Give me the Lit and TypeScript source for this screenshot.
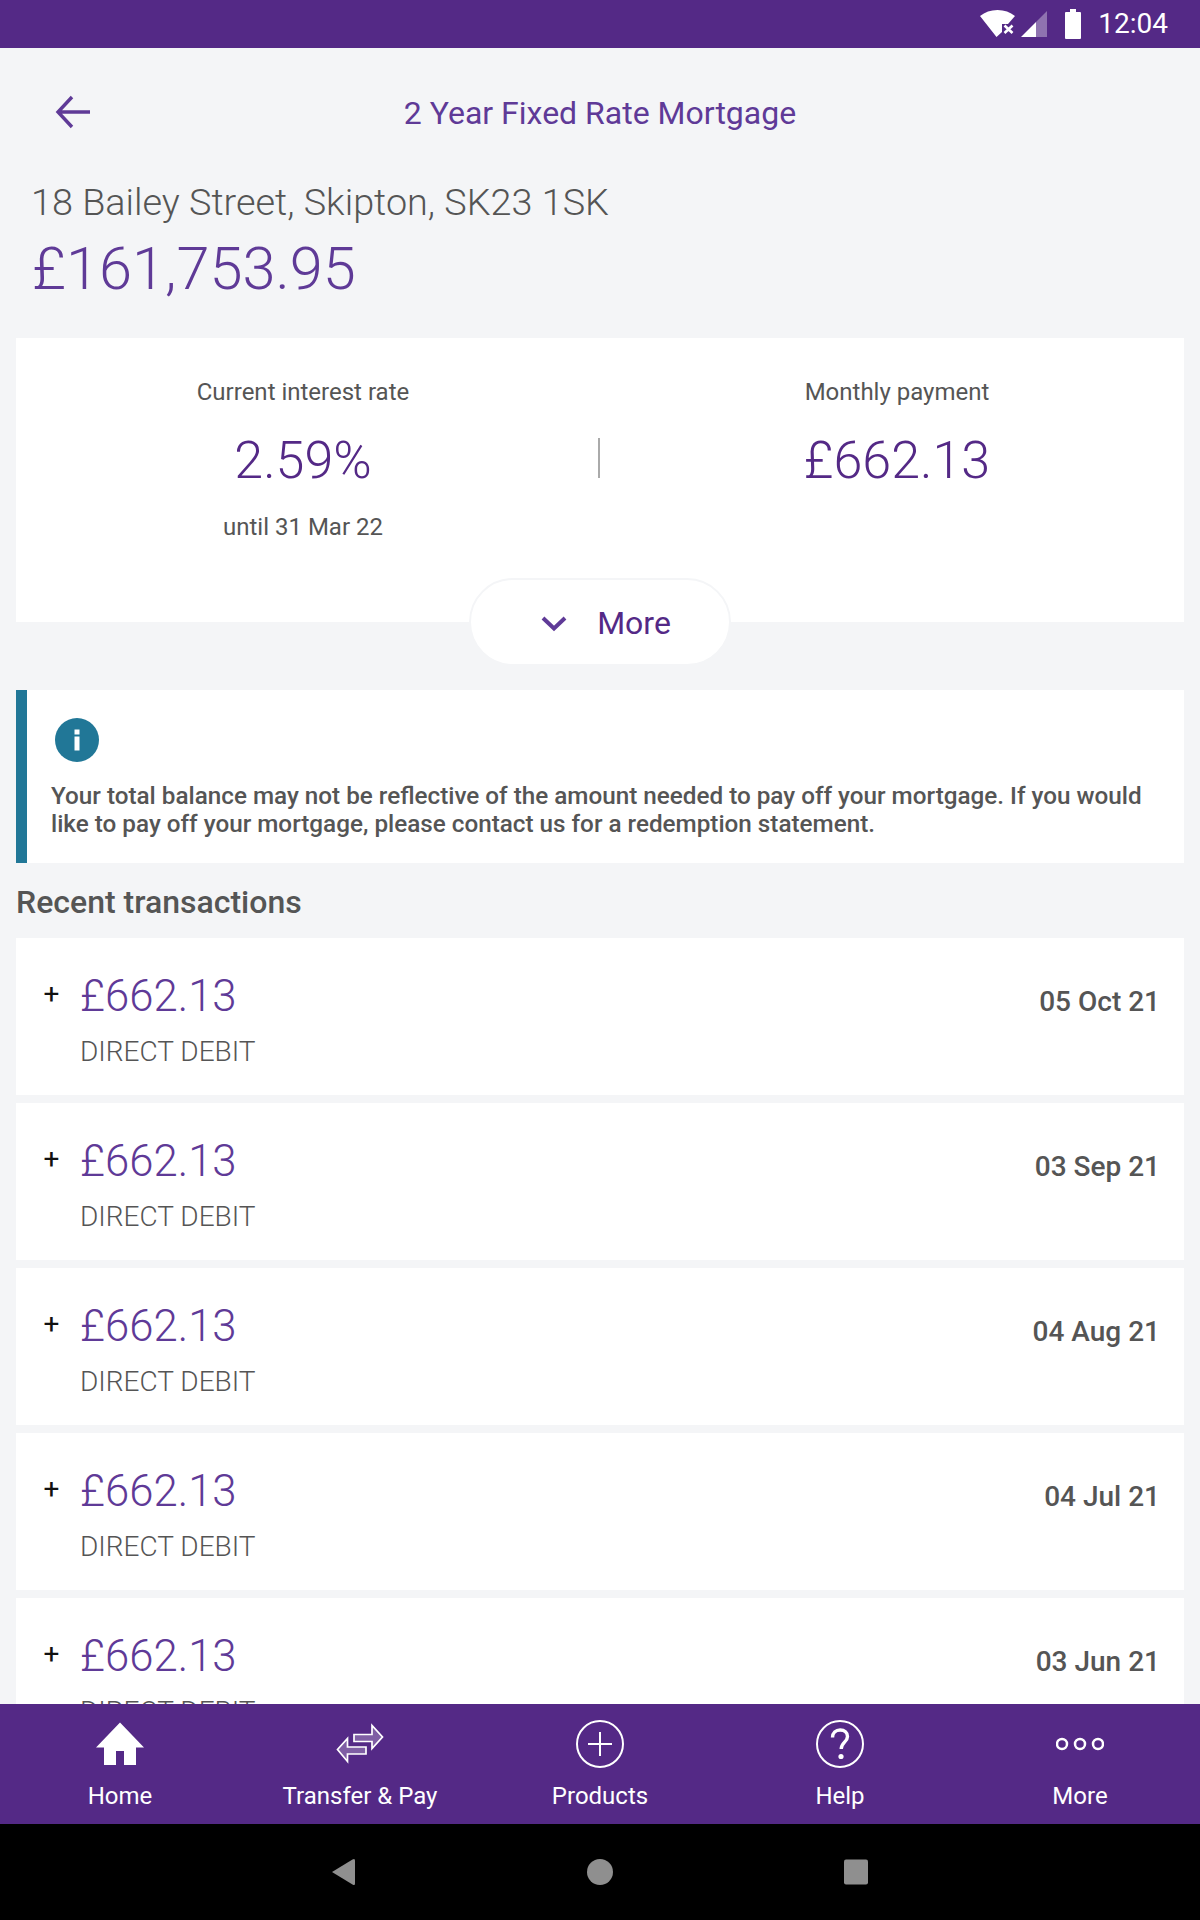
import { LitElement, html, css, svg } from "lit";
import { customElement } from "lit/decorators.js";

const TX = ["05 Oct 21", "03 Sep 21", "04 Aug 21", "04 Jul 21", "03 Jun 21"];

const homeIcon = svg`<svg class="ico" viewBox="0 0 48 48" width="48" height="48"><path fill="#fff" d="M24 2.500 0 27.500h8V45h12V31h8v14h12V27.500h8z"/></svg>`;
const transferIcon = svg`<svg class="ico" viewBox="0 0 48 48" width="48" height="48"><g fill="rgba(255,255,255,.25)" stroke="#fff" stroke-width="1.700"><path d="M18 14.500H36V5.500L46.500 17 36 28.500V21.500H18z"/><path d="M30 27H11.500V18.500L1.500 29.500 11.500 41.500V34H30z"/></g></svg>`;
const plusIcon = svg`<svg class="ico" viewBox="0 0 48 48" width="48" height="48"><circle cx="24" cy="24" r="23" fill="none" stroke="#fff" stroke-width="2"/><path d="M24 12v24M12 24h24" stroke="#fff" stroke-width="2"/></svg>`;
const helpIcon = svg`<svg class="ico" viewBox="0 0 48 48" width="48" height="48"><circle cx="24" cy="24" r="23" fill="none" stroke="#fff" stroke-width="2"/><path d="M16.500 17.500c0-4.500 3.300-7.500 7.700-7.500 4.300 0 7.300 2.700 7.300 6.500 0 5.500-6.300 6-6.300 12.500" fill="none" stroke="#fff" stroke-width="3.400"/><circle cx="25" cy="36.500" r="2.600" fill="#fff"/></svg>`;
const moreIcon = svg`<svg class="ico" viewBox="0 0 48 48" width="48" height="48"><g fill="none" stroke="#fff" stroke-width="2.500"><circle cx="6" cy="24" r="5"/><circle cx="24" cy="24" r="5"/><circle cx="42" cy="24" r="5"/></g></svg>`;

const NAV = [
  { label: "Home", icon: homeIcon },
  { label: "Transfer & Pay", icon: transferIcon },
  { label: "Products", icon: plusIcon },
  { label: "Help", icon: helpIcon },
  { label: "More", icon: moreIcon },
];

@customElement("app-root")
export class AppRoot extends LitElement {
  static styles = css`
    :host {
      display: flex;
      flex-direction: column;
      width: 1200px;
      height: 1920px;
      background: #f4f5f7;
      font-family: Roboto, "Liberation Sans", sans-serif;
      overflow: hidden;
    }
    .status {
      height: 48px;
      flex: none;
      background: #542986;
      display: flex;
      align-items: center;
      justify-content: flex-end;
    }
    .status svg { display: block; }
    .status .net { margin-right: 17px; }
    .clock {
      color: #fff;
      font-size: 28px;
      margin: 0 32px 0 17px;
      line-height: 48px;
    }
    .main { flex: 1; min-height: 0; overflow: hidden; }
    .topbar {
      height: 128px;
      display: grid;
      grid-template-columns: 1fr auto 1fr;
      align-items: center;
    }
    .topbar svg { display: block; margin-left: 55px; }
    .title { font-size: 32px; color: #5f3a97; line-height: 36px; margin-top: 2px; }
    .address {
      font-size: 37.800px;
      font-weight: 300;
      color: #555;
      margin: 0 0 0 31px;
      line-height: 52px;
    }
    .balance {
      font-size: 59.500px;
      font-weight: 300;
      color: #5f3a97;
      margin: 1px 0 0 32px;
      line-height: 80px;
    }
    .card {
      position: relative;
      margin: 29px 16px 0;
      height: 284px;
      background: #fff;
      display: grid;
      grid-template-columns: 1fr 20px 1fr;
    }
    .cell { text-align: center; padding-top: 40px; }
    .cell .lab { font-size: 24px; color: #555; line-height: 28px; }
    .cell .val { font-size: 52px; font-weight: 300; color: #542986; line-height: 60px; margin-top: 25px; }
    .cell .sub { font-size: 24px; color: #555; line-height: 28px; margin-top: 22px; }
    .divider { width: 2px; height: 40px; background: #aaa; margin: 100px 0 0 8px; }
    .pill {
      position: absolute;
      left: 453px;
      top: 240px;
      width: 262px;
      height: 88px;
      box-sizing: border-box;
      border-radius: 44px;
      background: #fff;
      border: 2px solid #f4f5f7;
      display: flex;
      align-items: center;
      justify-content: center;
      gap: 30px;
      font-size: 32px;
      color: #542986;
      padding: 2px 0 0 12px;
    }
    .pill svg { display: block; }
    .info {
      margin: 68px 16px 0;
      height: 173px;
      background: #fff;
      border-left: 11px solid #217797;
      box-sizing: border-box;
      padding: 28px 24px 0 24px;
    }
    .info svg { display: block; margin-left: 4px; }
    .info p {
      margin: 20px 0 0;
      font-size: 24.250px;
      font-weight: 500;
      line-height: 28px;
      color: #555;
    }
    .h2 {
      margin: 21px 16px 18px;
      font-size: 32px;
      font-weight: 500;
      line-height: 36px;
      color: #555;
    }
    .tx {
      margin: 0 16px 8px;
      height: 157px;
      background: #fff;
      display: grid;
      grid-template-columns: 64px 1fr auto;
      padding-right: 24px;
    }
    .tx .plus { font-size: 28px; color: #111; padding: 40px 0 0 27.500px; line-height: 32px; font-weight: 400; }
    .tx .amt { font-size: 43.700px; font-weight: 300; color: #5f3a97; line-height: 52px; margin-top: 32px; }
    .tx .desc { font-size: 28px; font-weight: 300; color: #555; line-height: 36px; margin-top: 12px; }
    .tx .date { font-size: 28px; font-weight: 500; color: #555; line-height: 32px; padding-top: 48px; }
    .nav {
      height: 120px;
      flex: none;
      background: #542986;
      display: grid;
      grid-template-columns: repeat(5, 1fr);
      position: relative;
    }
    .nav-item {
      display: flex;
      flex-direction: column;
      align-items: center;
      padding-top: 16px;
      color: #fff;
      font-size: 24px;
    }
    .ico { display: block; }
    .nav-item span { line-height: 32px; margin-top: 12px; }
    .sys {
      height: 96px;
      flex: none;
      background: #000;
      display: flex;
      align-items: center;
      justify-content: center;
    }
    .sys svg { display: block; }
  `;

  render() {
    return html`
      <div class="status">
        <svg class="net" width="70" height="48" viewBox="0 0 70 48">
          <path fill="#fff" d="M2 16C7 12 12.500 10 19.500 10S32 12 37 16L30 24H24V32L18.500 37z"/>
          <path d="M26.500 25.500l8 7.500M34.500 25.500l-8 7.500" stroke="#fff" stroke-width="2.600"/>
          <path fill="#fff" d="M43 37 58 22V37z"/>
          <path fill="#fff" fill-opacity=".35" d="M58 22 69 11V37H58z"/>
        </svg>
        <svg width="16" height="30" viewBox="0 0 16 30">
          <path fill="#fff" d="M5 0h6v3h4a1 1 0 0 1 1 1v25a1 1 0 0 1-1 1H1a1 1 0 0 1-1-1V4a1 1 0 0 1 1-1h4z"/>
        </svg>
        <span class="clock">12:04</span>
      </div>
      <div class="main">
        <div class="topbar">
          <svg width="36" height="36" viewBox="0 0 36 36">
            <path d="M17 3 3 18l14 15M3 18h32" fill="none" stroke="#5f3a97" stroke-width="3.400"/>
          </svg>
          <div class="title">2 Year Fixed Rate Mortgage</div>
          <div></div>
        </div>
        <div class="address">18 Bailey Street, Skipton, SK23 1SK</div>
        <div class="balance">£161,753.95</div>
        <div class="card">
          <div class="cell">
            <div class="lab">Current interest rate</div>
            <div class="val">2.59%</div>
            <div class="sub">until 31 Mar 22</div>
          </div>
          <div class="divider"></div>
          <div class="cell">
            <div class="lab">Monthly payment</div>
            <div class="val">£662.13</div>
          </div>
          <div class="pill">
            <svg width="26" height="18" viewBox="0 0 26 18"><path d="M2 4l11 10.500L24 4" fill="none" stroke="#5f3a97" stroke-width="4"/></svg>
            <span>More</span>
          </div>
        </div>
        <div class="info">
          <svg width="44" height="44" viewBox="0 0 44 44">
            <circle cx="22" cy="22" r="22" fill="#217797"/>
            <rect x="19.500" y="18.500" width="5" height="14" fill="#fff"/>
            <rect x="19.500" y="11.500" width="5" height="5" fill="#fff"/>
          </svg>
          <p>Your total balance may not be reflective of the amount needed to pay off your mortgage. If you would like to pay off your mortgage, please contact us for a redemption statement.</p>
        </div>
        <div class="h2">Recent transactions</div>
        ${TX.map(
          (d) => html`<div class="tx">
            <div class="plus">+</div>
            <div>
              <div class="amt">£662.13</div>
              <div class="desc">DIRECT DEBIT</div>
            </div>
            <div class="date">${d}</div>
          </div>`
        )}
      </div>
      <div class="nav">
        ${NAV.map((n) => html`<div class="nav-item">${n.icon}<span>${n.label}</span></div>`)}
      </div>
      <div class="sys">
        <svg width="560" height="40" viewBox="0 0 560 40">
          <path fill="#8f8f8f" d="M12 20 32.500 7.500q2.500-1.500 2.500 1v23q0 2.500-2.500 1z"/>
          <circle cx="280" cy="20" r="13" fill="#8f8f8f"/>
          <rect x="524" y="7.500" width="24" height="25" rx="2" fill="#8f8f8f"/>
        </svg>
      </div>
    `;
  }
}
